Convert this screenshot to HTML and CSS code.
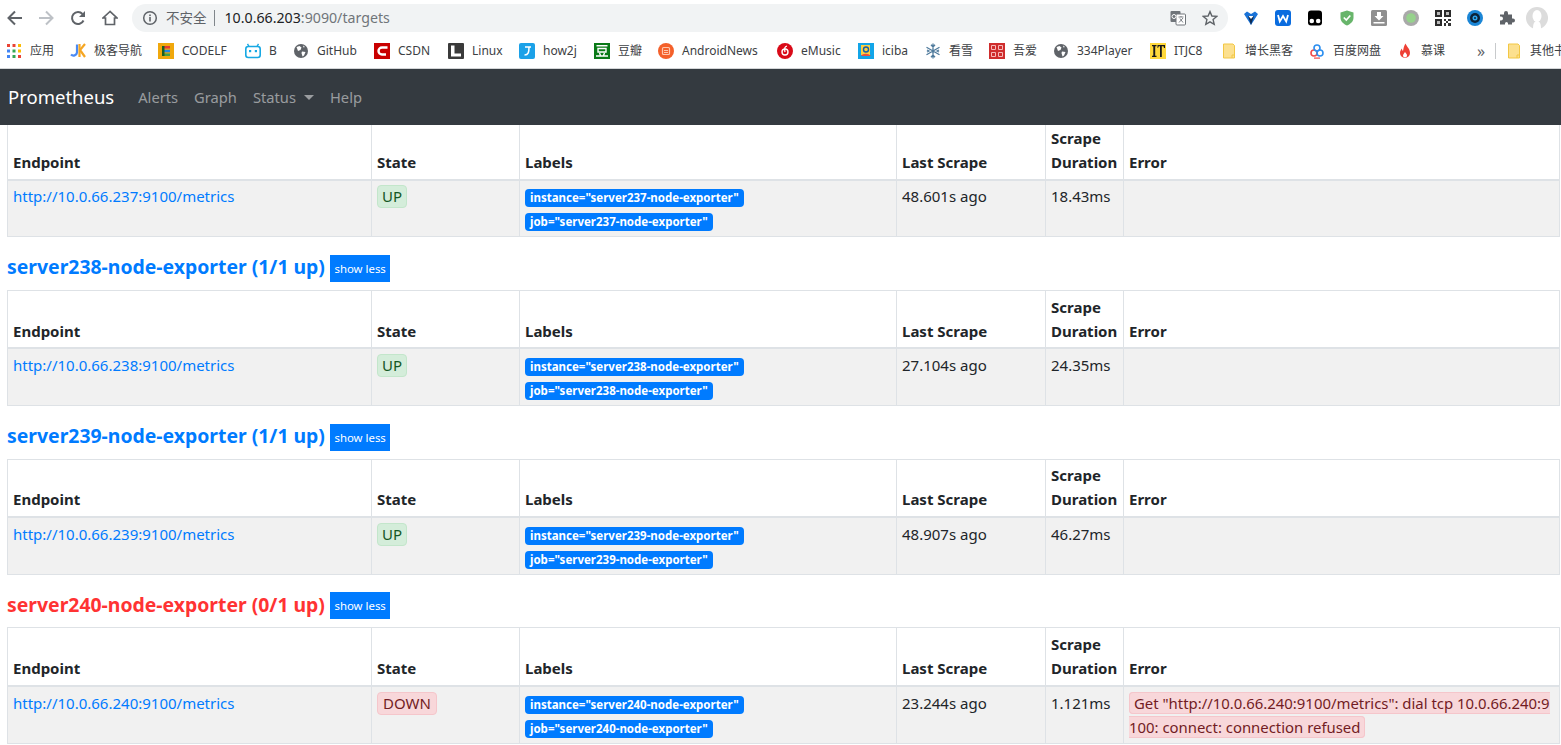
FILE: index.html
```html
<!DOCTYPE html>
<html lang="en">

<head>
    <meta charset="UTF-8">
    <title>Prometheus Time Series Collection and Processing Server</title>
    <link rel="stylesheet" href="styles.css">
</head>

<body>
    <!-- browser chrome -->
    <div class="toolbar">
        <span class="tb-btn first"><svg width="16" height="16" viewBox="0 0 16 16"><path d="M15 8H2M8 1.5L1.5 8 8 14.5" fill="none" stroke="#5f6368" stroke-width="2"/></svg></span>
        <span class="tb-btn"><svg width="16" height="16" viewBox="0 0 16 16"><path d="M1 8h13M8 1.5L14.500 8 8 14.5" fill="none" stroke="#bdc1c6" stroke-width="2"/></svg></span>
        <span class="tb-btn"><svg width="16" height="16" viewBox="0 0 16 16"><path d="M13.500 10.500A6 6 0 1 1 12.500 4" fill="none" stroke="#5f6368" stroke-width="2"/><path d="M15 1v6H9z" fill="#5f6368"/></svg></span>
        <span class="tb-btn"><svg width="16" height="16" viewBox="0 0 16 16"><path d="M8 1.500L1 8h2.500v6.500h9V8H15z" fill="none" stroke="#5f6368" stroke-width="1.700"/></svg></span>
        <div class="omnibox">
            <svg class="info-icon" width="16" height="16" viewBox="0 0 16 16"><circle cx="8" cy="8" r="6.300" fill="none" stroke="#5f6368" stroke-width="1.500"/><rect x="7.200" y="7" width="1.600" height="4.500" fill="#5f6368"/><rect x="7.200" y="4.500" width="1.600" height="1.600" fill="#5f6368"/></svg>
            <span class="insecure">不安全</span>
            <span class="omni-sep"></span>
            <span class="url">10.0.66.203<span class="url-rest">:9090/targets</span></span>
            <svg class="translate-icon" width="16" height="16" viewBox="0 0 16 16"><rect x="0.500" y="1" width="10" height="11" rx="1" fill="#70757a"/><rect x="6" y="4" width="9.500" height="11" rx="1" fill="#fff" stroke="#70757a"/><circle cx="4" cy="6.500" r="2" fill="none" stroke="#fff"/><path d="M8.500 7h5M11 6v1M9 12.500l4-4.500M10 8.500l3 4" stroke="#70757a" fill="none" stroke-width="0.900"/></svg>
            <svg class="star-icon" width="16" height="16" viewBox="0 0 16 16"><path d="M8 1.600l1.900 4.400 4.800.4-3.600 3.200 1.100 4.700L8 11.800l-4.200 2.500 1.100-4.700L1.300 6.400l4.800-.4z" fill="none" stroke="#5f6368" stroke-width="1.400"/></svg>
        </div>
        <div class="extensions">
            <span class="tb-btn"><svg width="16" height="16" viewBox="0 0 16 16"><path d="M8 15L1 4l3-2.500L8 4l4-2.500L15 4z" fill="#1a73d8"/><path d="M8 15L5 6h6z" fill="#0d2b52"/><path d="M5.500 6L8 9l2.500-3z" fill="#fff"/></svg></span>
            <span class="tb-btn"><svg width="16" height="16" viewBox="0 0 16 16"><rect width="16" height="16" rx="3" fill="#0a6cdf"/><path d="M3 5l1.800 6.500L8 6l3.200 5.500L13 5" fill="none" stroke="#fff" stroke-width="1.800"/></svg></span>
            <span class="tb-btn"><svg width="16" height="16" viewBox="0 0 16 16"><rect x="1" y="0.500" width="14" height="15" rx="3" fill="#000"/><circle cx="4.800" cy="11" r="2.300" fill="#fff"/><circle cx="11.200" cy="11" r="2.300" fill="#fff"/></svg></span>
            <span class="tb-btn"><svg width="16" height="16" viewBox="0 0 16 16"><path d="M8 0.500l6.500 2v5c0 4-3 6.500-6.500 8-3.500-1.500-6.500-4-6.500-8v-5z" fill="#68b56b"/><path d="M4.800 7.500L7.300 10l4-4.500" fill="none" stroke="#fff" stroke-width="1.700"/></svg></span>
            <span class="tb-btn"><svg width="16" height="16" viewBox="0 0 16 16"><rect width="16" height="16" rx="1.500" fill="#8f8f8f"/><path d="M6 2h4v4h2.500L8 10.500 3.500 6H6z" fill="#fff"/><rect x="2.500" y="12" width="11" height="1.500" fill="#fff"/></svg></span>
            <span class="tb-btn"><svg width="16" height="16" viewBox="0 0 16 16"><circle cx="8" cy="8" r="8" fill="#a9a9a9"/><circle cx="8" cy="8" r="4.800" fill="#96d28c"/></svg></span>
            <span class="tb-btn"><svg width="16" height="16" viewBox="0 0 16 16"><rect width="16" height="16" fill="#fff"/><path d="M0 0h7v7H0zM9 0h7v7H9zM0 9h7v7H0z" fill="#2b2b2b"/><path d="M2 2h3v3H2zM11 2h3v3h-3zM2 11h3v3H2z" fill="#bbb"/><path d="M9 9h2v2H9zM13 9h3v2h-3zM11 11h2v2h-2zM9 13h2v3H9zM13 13h3v3h-3z" fill="#333"/></svg></span>
            <span class="tb-btn"><svg width="16" height="16" viewBox="0 0 16 16"><circle cx="8" cy="8" r="8" fill="#1b86d6"/><circle cx="8" cy="8" r="5" fill="#0c2238"/><circle cx="8" cy="8" r="2.500" fill="#2ea7f0"/><circle cx="8" cy="8" r="1" fill="#0c2238"/></svg></span>
            <span class="tb-btn"><svg width="16" height="16" viewBox="0 0 16 16"><path d="M1 5h4V3.500a2 2 0 0 1 4 0V5h4v4h1a2 2 0 0 1 0 4h-1v2H9v-1a1.500 1.500 0 0 0-3 0v1H1v-4h1a2 2 0 0 0 0-4H1z" fill="#5f6368" transform="translate(0 -0.500)"/></svg></span>
            <span class="avatar"><svg width="22" height="22" viewBox="0 0 22 22"><circle cx="11" cy="11" r="11" fill="#dcdcdc"/><ellipse cx="11" cy="9" rx="4.500" ry="6" fill="#fff"/><path d="M7 22c0-5 1-8 4-8s4 3 4 8z" fill="#fff"/></svg></span>
        </div>
    </div>

    <div class="bookmarks">
        <span class="bm"><svg width="16" height="16" viewBox="0 0 16 16"><path d="M1 1h3v3H1z" fill="#ea4335"/><path d="M6.500 1h3v3h-3z" fill="#ea4335"/><path d="M12 1h3v3h-3z" fill="#fbbc05"/><path d="M1 6.500h3v3H1z" fill="#4285f4"/><path d="M6.500 6.500h3v3h-3z" fill="#34a853"/><path d="M12 6.500h3v3h-3z" fill="#fbbc05"/><path d="M1 12h3v3H1z" fill="#4285f4"/><path d="M6.500 12h3v3h-3z" fill="#34a853"/><path d="M12 12h3v3h-3z" fill="#ea4335"/></svg>应用</span>
        <span class="bm"><svg width="16" height="16" viewBox="0 0 16 16"><path d="M7 1.500v8a3.500 3.500 0 0 1-6 2" fill="none" stroke="#4a8af4" stroke-width="2.200"/><path d="M9.500 1v13" stroke="#f5a623" stroke-width="2.200"/><path d="M15 1l-5 6 5 7" fill="none" stroke="#f5a623" stroke-width="2.200"/></svg>极客导航</span>
        <span class="bm"><svg width="16" height="16" viewBox="0 0 16 16"><rect width="16" height="16" fill="#f0a80d"/><rect x="4" y="3" width="8" height="2.500" fill="#e53935"/><rect x="4" y="6.800" width="8" height="2.500" fill="#1e88e5"/><rect x="4" y="10.500" width="8" height="2.500" fill="#43a047"/><rect x="4" y="3" width="2.500" height="10" fill="#1b5e20"/></svg>CODELF</span>
        <span class="bm"><svg width="16" height="16" viewBox="0 0 16 16"><rect x="0.800" y="3.500" width="14.400" height="11" rx="2.500" fill="none" stroke="#17a8e3" stroke-width="1.600"/><path d="M4 3.500L2.500 0.800M12 3.500l1.500-2.700" stroke="#17a8e3" stroke-width="1.400"/><rect x="4" y="7" width="2.200" height="2.200" fill="#17a8e3"/><rect x="9.800" y="7" width="2.200" height="2.200" fill="#17a8e3"/></svg>B</span>
        <span class="bm"><svg width="16" height="16" viewBox="0 0 16 16"><use href="#globe"/></svg>GitHub</span>
        <span class="bm"><svg width="16" height="16" viewBox="0 0 16 16"><rect width="16" height="16" fill="#c90000"/><path d="M13.500 4.500H8a3.500 3.500 0 0 0 0 7h4" fill="none" stroke="#fff" stroke-width="2.400"/></svg>CSDN</span>
        <span class="bm"><svg width="16" height="16" viewBox="0 0 16 16"><rect width="16" height="16" rx="1" fill="#3a3a3a"/><path d="M3 2.500h3.500v8H13v3H3z" fill="#fff"/></svg>Linux</span>
        <span class="bm"><svg width="16" height="16" viewBox="0 0 16 16"><rect width="16" height="16" rx="2" fill="#1ba1e8"/><path d="M6 4h6M10 4c0 5-.5 8-4.500 8" fill="none" stroke="#fff" stroke-width="1.500"/></svg>how2j</span>
        <span class="bm"><svg width="16" height="16" viewBox="0 0 16 16"><rect width="16" height="16" fill="#0a7a17"/><path d="M2.500 2.800h11M4 5.500h8v3.500H4zM5.500 10l1 2.500M10.500 10l-1 2.500M2 13h12" fill="none" stroke="#fff" stroke-width="1.400"/></svg>豆瓣</span>
        <span class="bm"><svg width="16" height="16" viewBox="0 0 16 16"><circle cx="8" cy="8" r="8" fill="#f4602a"/><rect x="4.500" y="4.500" width="7" height="7" rx="1" fill="none" stroke="#ffc7ad" stroke-width="1.200"/><path d="M6 7.500h4M6 9.500h4" stroke="#ffc7ad"/></svg>AndroidNews</span>
        <span class="bm"><svg width="16" height="16" viewBox="0 0 16 16"><circle cx="8" cy="8" r="8" fill="#d90a18"/><circle cx="8" cy="9" r="3" fill="none" stroke="#fff" stroke-width="1.400"/><path d="M10 3.200C8 3.500 7 5 8 9" fill="none" stroke="#fff" stroke-width="1.300"/></svg>eMusic</span>
        <span class="bm"><svg width="16" height="16" viewBox="0 0 16 16"><rect width="16" height="16" fill="#12a5e8"/><rect x="3" y="2" width="9" height="10" fill="#ffcf3f"/><circle cx="8" cy="6.500" r="2.500" fill="none" stroke="#1560a8" stroke-width="1.400"/><path d="M3 13c2-3 7-3 10 0z" fill="#ea4e3d"/></svg>iciba</span>
        <span class="bm"><svg width="16" height="16" viewBox="0 0 16 16"><path d="M8 0.500v15M1.500 4.200l13 7.600M14.500 4.200l-13 7.600M6 1.800L8 4l2-2.200M6 14.200L8 12l2 2.200M2 7l2 1-2 1M14 7l-2 1 2 1" fill="none" stroke="#4f7a9c" stroke-width="1.300"/></svg>看雪</span>
        <span class="bm"><svg width="16" height="16" viewBox="0 0 16 16"><rect width="16" height="16" fill="#cf2d2d"/><path d="M2.500 2.500h4v4h-4zM9.500 2.500h4v4h-4zM2.500 9.500h4v4h-4zM9.500 9.500h4v4h-4z" fill="none" stroke="#f7b9b9"/></svg>吾爱</span>
        <span class="bm"><svg width="16" height="16" viewBox="0 0 16 16"><use href="#globe"/></svg>334Player</span>
        <span class="bm"><svg width="16" height="16" viewBox="0 0 16 16"><rect width="16" height="16" fill="#ffd83b"/><path d="M2 2h4.500v1.200H5.200v9.600h1.300V14H2v-1.200h1.300V3.200H2zM7.500 2H15v3h-1l-.5-1.800h-1.700V14H10V3.200H8.800L8 5H7.500z" fill="#1a1a1a"/></svg>ITJC8</span>
        <span class="bm"><svg width="16" height="16" viewBox="0 0 16 16"><use href="#folder"/></svg>增长黑客</span>
        <span class="bm"><svg width="16" height="16" viewBox="0 0 16 16"><circle cx="5" cy="10" r="3" fill="none" stroke="#ef4b4b" stroke-width="1.600"/><circle cx="11" cy="10" r="3" fill="none" stroke="#2c8ff0" stroke-width="1.600"/><circle cx="8" cy="5" r="3" fill="none" stroke="#2c8ff0" stroke-width="1.600"/><rect x="5" y="14.500" width="6" height="1.200" fill="#ef4b4b"/></svg>百度网盘</span>
        <span class="bm"><svg width="16" height="16" viewBox="0 0 16 16"><path d="M8.500 0.500c1 3 4.500 5 4.500 9.500a5 5 0 0 1-10 0c0-2 1-3.500 2-4.500 0 1.500.5 2 1 2.500C6.500 5 7 3 8.500 .5z" fill="#ee4035"/><path d="M8 9c1 1.500 2 2 2 3.500a2 2 0 0 1-4 0c0-1 1-2 2-3.500z" fill="#fff"/></svg>慕课</span>
        <span class="bm-more">»</span>
        <span class="bm-sep"></span>
        <span class="bm"><svg width="16" height="16" viewBox="0 0 16 16"><use href="#folder"/></svg>其他书签</span>
    </div>

    <svg class="defs" width="0" height="0">
        <defs>
            <g id="globe"><circle cx="8" cy="8" r="7" fill="#5f6368"/><path d="M3.500 4l3-1 2 1.500-1 2.500-2.500 1zM9 8.500l3.500.5-1.500 3.500-1.500 1-1-3.500zM10 2.500l2 1.500-1.500.5z" fill="#fff"/></g>
            <g id="folder"><path d="M2.500 1h9.500l1.500 1.500v12.500h-11z" fill="#fce08f" stroke="#f2c744"/><path d="M11 15v-3h2.500" fill="none" stroke="#f2c744"/></g>
        </defs>
    </svg>

    <nav class="navbar">
        <a class="brand">Prometheus</a>
        <a class="nav-link">Alerts</a>
        <a class="nav-link">Graph</a>
        <a class="nav-link">Status<span class="caret"></span></a>
        <a class="nav-link">Help</a>
    </nav>

    <main class="content">
        <div class="group first-group">
            <table class="targets">
                <thead>
                    <tr><th class="c-endpoint">Endpoint</th><th class="c-state">State</th><th class="c-labels">Labels</th><th class="c-last">Last Scrape</th><th class="c-dur">Scrape Duration</th><th>Error</th></tr>
                </thead>
                <tbody>
                    <tr>
                        <td><a class="link">http://10.0.66.237:9100/metrics</a></td>
                        <td class="state-cell"><span class="state up">UP</span></td>
                        <td class="labels-cell"><div><span class="badge">instance="server237-node-exporter"</span></div><div><span class="badge">job="server237-node-exporter"</span></div></td>
                        <td>48.601s ago</td>
                        <td>18.43ms</td>
                        <td></td>
                    </tr>
                </tbody>
            </table>
        </div>

        <div class="group">
            <div class="group-head"><h2 class="ok">server238-node-exporter (1/1 up)</h2><button class="toggle">show less</button></div>
            <table class="targets">
                <thead>
                    <tr><th class="c-endpoint">Endpoint</th><th class="c-state">State</th><th class="c-labels">Labels</th><th class="c-last">Last Scrape</th><th class="c-dur">Scrape Duration</th><th>Error</th></tr>
                </thead>
                <tbody>
                    <tr>
                        <td><a class="link">http://10.0.66.238:9100/metrics</a></td>
                        <td class="state-cell"><span class="state up">UP</span></td>
                        <td class="labels-cell"><div><span class="badge">instance="server238-node-exporter"</span></div><div><span class="badge">job="server238-node-exporter"</span></div></td>
                        <td>27.104s ago</td>
                        <td>24.35ms</td>
                        <td></td>
                    </tr>
                </tbody>
            </table>
        </div>

        <div class="group">
            <div class="group-head"><h2 class="ok">server239-node-exporter (1/1 up)</h2><button class="toggle">show less</button></div>
            <table class="targets">
                <thead>
                    <tr><th class="c-endpoint">Endpoint</th><th class="c-state">State</th><th class="c-labels">Labels</th><th class="c-last">Last Scrape</th><th class="c-dur">Scrape Duration</th><th>Error</th></tr>
                </thead>
                <tbody>
                    <tr>
                        <td><a class="link">http://10.0.66.239:9100/metrics</a></td>
                        <td class="state-cell"><span class="state up">UP</span></td>
                        <td class="labels-cell"><div><span class="badge">instance="server239-node-exporter"</span></div><div><span class="badge">job="server239-node-exporter"</span></div></td>
                        <td>48.907s ago</td>
                        <td>46.27ms</td>
                        <td></td>
                    </tr>
                </tbody>
            </table>
        </div>

        <div class="group">
            <div class="group-head"><h2 class="bad">server240-node-exporter (0/1 up)</h2><button class="toggle">show less</button></div>
            <table class="targets">
                <thead>
                    <tr><th class="c-endpoint">Endpoint</th><th class="c-state">State</th><th class="c-labels">Labels</th><th class="c-last">Last Scrape</th><th class="c-dur">Scrape Duration</th><th>Error</th></tr>
                </thead>
                <tbody>
                    <tr>
                        <td><a class="link">http://10.0.66.240:9100/metrics</a></td>
                        <td class="state-cell"><span class="state down">DOWN</span></td>
                        <td class="labels-cell"><div><span class="badge">instance="server240-node-exporter"</span></div><div><span class="badge">job="server240-node-exporter"</span></div></td>
                        <td>23.244s ago</td>
                        <td>1.121ms</td>
                        <td><span class="error">Get "http://10.0.66.240:9100/metrics": dial tcp 10.0.66.240:9100: connect: connection refused</span></td>
                    </tr>
                </tbody>
            </table>
        </div>
    </main>
</body>

</html>
```

FILE: styles.css
```css
* {
    box-sizing: border-box;
}

html,
body {
    height: 100%;
}

body {
    margin: 0;
    height: 745px;
    display: flex;
    flex-direction: column;
    overflow: hidden;
    background: #fff;
    color: #212529;
    font-family: "Noto Sans", "Noto Sans CJK SC", sans-serif;
    font-size: 15px;
    line-height: 24px;
}

/* browser chrome */
.toolbar {
    display: flex;
    align-items: center;
    height: 36px;
    flex: none;
}

.tb-btn {
    display: flex;
    align-items: center;
    justify-content: center;
    width: 32px;
    flex: none;
}

.tb-btn.first {
    width: 30px;
}

.omnibox {
    display: flex;
    align-items: center;
    width: 1096px;
    height: 28px;
    margin-left: 6px;
    padding-left: 10px;
    background: #f1f3f4;
    border-radius: 14px;
    font-size: 14.200px;
}

.insecure {
    margin-left: 8px;
    font-size: 13.500px;
    color: #5f6368;
}

.omni-sep {
    width: 1px;
    height: 16px;
    margin: 0 10px 0 7px;
    background: #80868b;
}

.url {
    color: #202124;
}

.url-rest {
    color: #70757a;
}

.translate-icon {
    margin-left: auto;
    margin-right: 16px;
}

.star-icon {
    margin-right: 10px;
}

.extensions {
    display: flex;
    align-items: center;
    margin-left: 7px;
}

.avatar {
    display: flex;
    justify-content: center;
    width: 28px;
}

.bookmarks {
    display: grid;
    grid-template-columns: 64px 88px 87px 48px 81px 74px 71px 75px 64px 119px 81px 67px 64px 64px 97px 71px 88px 88px 80px 18px 11px 80px;
    align-items: center;
    height: 33px;
    padding: 0 0 3px 6px;
    flex: none;
    overflow: hidden;
    border-bottom: 1px solid #d4d6d8;
    font-size: 12px;
    color: #3c4043;
}

.bm {
    display: flex;
    align-items: center;
    gap: 8px;
    white-space: nowrap;
}

.bm svg {
    flex: none;
}

.bm-more {
    font-size: 16px;
    color: #5f6368;
}

.bm-sep {
    width: 1px;
    height: 16px;
    background: #c8cacc;
}

.defs {
    position: absolute;
}

/* prometheus page */
.navbar {
    display: flex;
    align-items: center;
    height: 56px;
    padding: 0 8px;
    flex: none;
    background: #343a40;
    font-size: 14.700px;
}

.brand {
    margin-right: 16px;
    font-size: 18.500px;
    color: #fff;
}

.nav-link {
    padding: 0 8px;
    color: rgba(255, 255, 255, 0.5);
}

.caret {
    display: inline-block;
    margin-left: 8px;
    vertical-align: 3px;
    border-top: 5px solid;
    border-left: 5px solid transparent;
    border-right: 5px solid transparent;
}

.content {
    flex: 1;
    min-height: 0;
    padding: 0 1px 0 7px;
    overflow: hidden;
}

.first-group {
    margin-top: -4px;
}

.group-head {
    display: flex;
    align-items: center;
    height: 27px;
    margin: 17.600px 0 8px;
}

h2 {
    margin: 0;
    padding-bottom: 2px;
    font-size: 19.400px;
    font-weight: 700;
}

.ok {
    color: #007bff;
}

.bad {
    color: #f33;
}

.toggle {
    height: 27px;
    margin-left: 5.500px;
    padding: 0 4px;
    border: none;
    background: #007bff;
    color: #fff;
    font-family: inherit;
    font-size: 11.400px;
}

.targets {
    width: 100%;
    border-collapse: collapse;
    table-layout: fixed;
}

.targets th,
.targets td {
    border: 1px solid #dee2e6;
    vertical-align: top;
    text-align: left;
}

.targets th {
    padding: 3.800px 5px 4.800px;
    vertical-align: bottom;
    border-bottom-width: 2px;
    font-weight: 700;
}

.targets td {
    padding: 3.800px 5px;
    background: #f1f1f1;
}

.c-endpoint {
    width: 364px;
}

.c-state {
    width: 148px;
}

.c-labels {
    width: 377px;
}

.c-last {
    width: 149px;
}

.c-dur {
    width: 78px;
}

.link {
    color: #007bff;
}

.state {
    display: inline-block;
    padding: 0 4px;
    border: 1px solid;
    border-radius: 4px;
    line-height: 21px;
}

.up {
    background: #d4edda;
    border-color: #c3e6cb;
    color: #155724;
}

.down {
    padding: 0 5px;
    background: #f8d7da;
    border-color: #f5c6cb;
    color: #721c24;
}

.badge {
    display: inline-block;
    padding: 3px 5px;
    border-radius: 4px;
    background: #007bff;
    color: #fff;
    font-size: 11.500px;
    font-weight: 700;
    line-height: 12px;
}

.error {
    padding: 0 4px;
    border: 1px solid #f5c6cb;
    border-radius: 4px;
    background: #f8d7da;
    color: #721c24;
    font-size: 14.900px;
    word-break: break-all;
}
```
